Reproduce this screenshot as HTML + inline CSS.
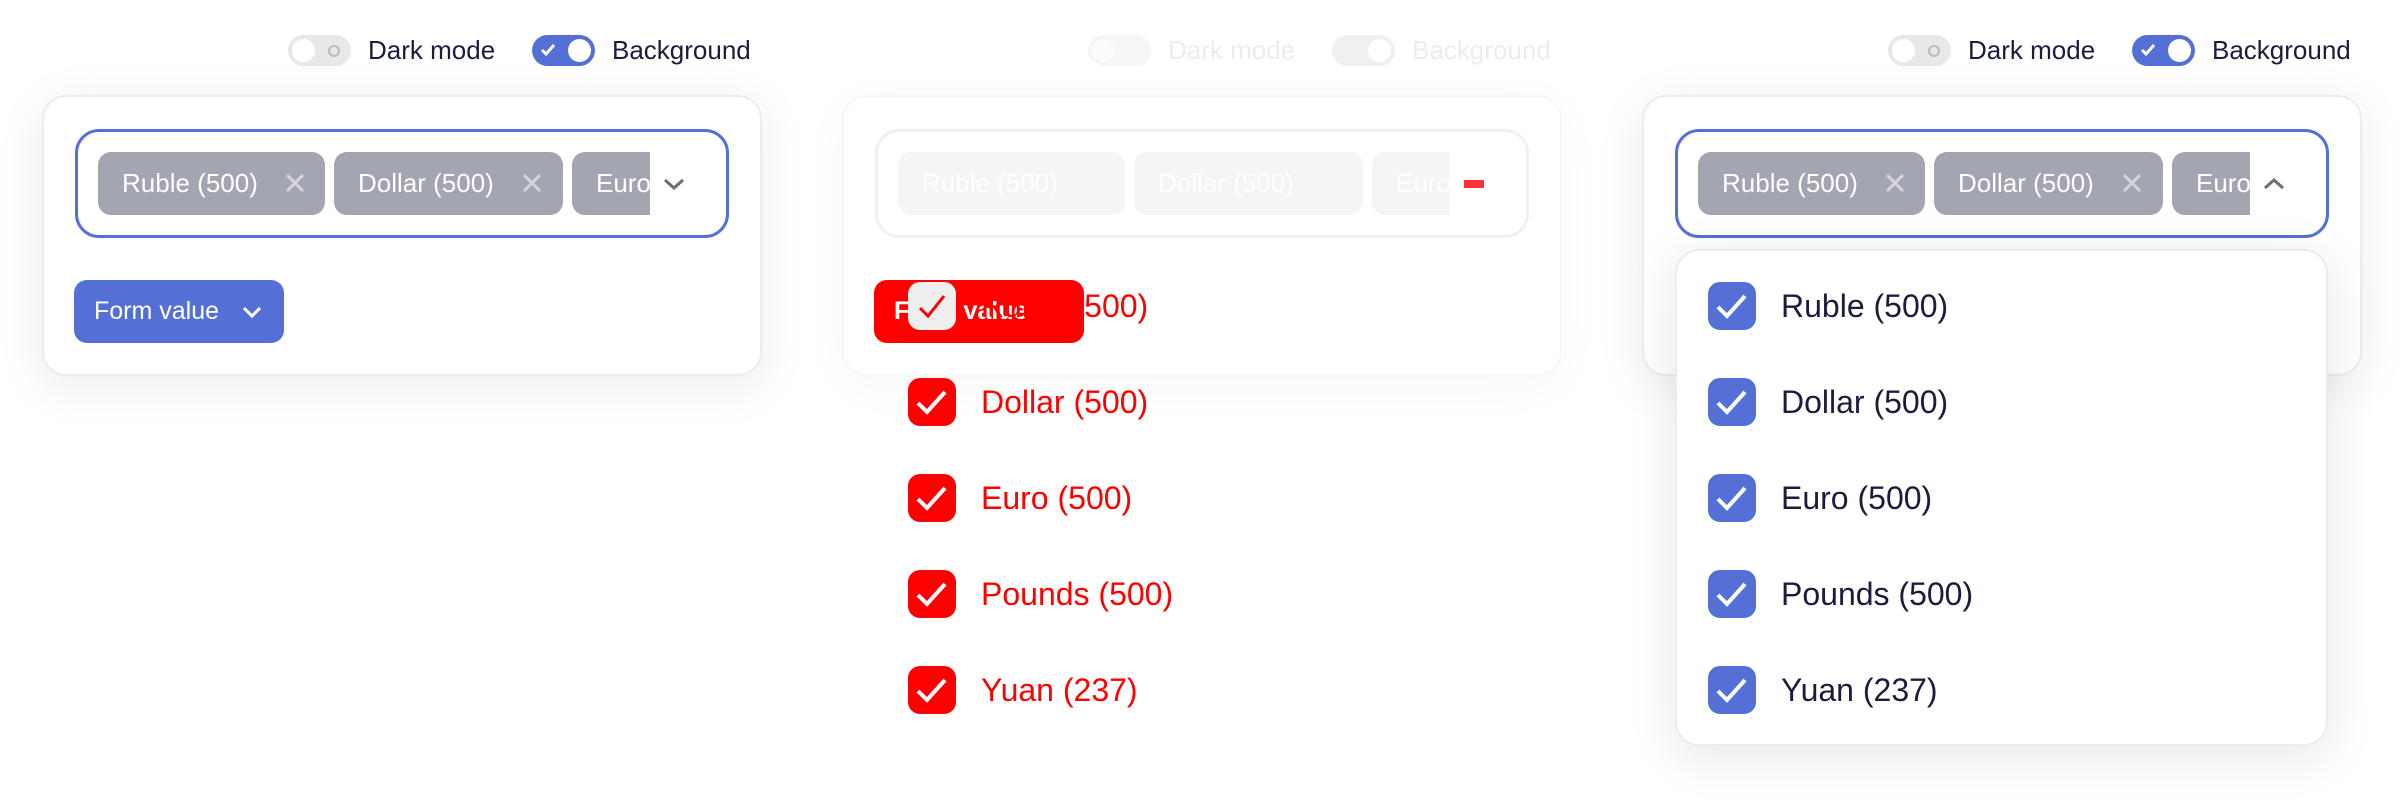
<!DOCTYPE html>
<html><head><meta charset="utf-8"><style>
*{box-sizing:border-box;margin:0;padding:0}
body{width:2400px;height:800px;background:#fff;font-family:"Liberation Sans",sans-serif;position:relative;overflow:hidden}
.p{position:absolute;top:0;width:800px;height:800px}
.tg{position:absolute;top:35px;width:63px;height:31px;border-radius:16px}
.knob{position:absolute;top:4px;width:23px;height:23px;border-radius:50%;background:#fff}
.lbl{position:absolute;top:32px;font-size:26px;color:#1a1c3d;line-height:36px}
.card{position:absolute;left:42px;top:95px;width:720px;height:281px;border-radius:24px;background:#fff;border:2px solid #ececec;box-shadow:0 10px 50px rgba(0,0,0,.08)}
.inp{position:absolute;left:75px;top:129px;width:654px;height:109px;border:3px solid #5470d6;border-radius:24px}
.chip{position:absolute;top:152px;height:63px;border-radius:13px;background:#a3a5b1;color:#fff;font-size:26px;line-height:63px;padding-left:24px;overflow:hidden;white-space:nowrap}
.x{position:absolute;top:20px;width:22px;height:22px}
.btn{position:absolute;left:74px;top:280px;width:210px;height:63px;border-radius:13px;background:#5470d6;color:#fff;font-size:25px;line-height:63px;padding-left:20px}
.dd{position:absolute;left:75px;top:249px;width:653px;height:497px;border-radius:24px;background:#fff;border:2px solid #ececec;box-shadow:0 10px 50px rgba(0,0,0,.1)}
.row{position:absolute;left:108px;height:48px;z-index:2}
.cb{position:absolute;left:0;top:0;width:48px;height:48px;border-radius:12px;background:#5470d6}
.rt{position:absolute;left:73px;top:-2px;font-size:32px;line-height:52px;color:#1a1c3d;white-space:nowrap}
</style></head><body>

<div class="p" style="left:0">
 <div class="tg" style="left:288px;background:#e8e8e8"><div class="knob" style="left:4px"></div><div style="position:absolute;left:40px;top:10px;width:12px;height:12px;border:2px solid #bbb;border-radius:50%"></div></div>
 <div class="lbl" style="left:368px">Dark mode</div>
 <div class="tg" style="left:532px;background:#5470d6"><svg style="position:absolute;left:8px;top:8px" width="16" height="14"><path d="M2 7l4 4 8-9" stroke="#fff" stroke-width="3" fill="none"/></svg><div class="knob" style="left:36px"></div></div>
 <div class="lbl" style="left:612px">Background</div>
 <div class="card"></div>
 <div class="inp"></div>
 <div class="chip" style="left:98px;width:227px">Ruble (500)<svg class="x" style="left:186px" viewBox="0 0 22 22"><path d="M3 3l16 16M19 3L3 19" stroke="#d4d5db" stroke-width="3"/></svg></div>
 <div class="chip" style="left:334px;width:229px">Dollar (500)<svg class="x" style="left:187px" viewBox="0 0 22 22"><path d="M3 3l16 16M19 3L3 19" stroke="#d4d5db" stroke-width="3"/></svg></div>
 <div class="chip" style="left:572px;width:78px;border-radius:13px 0 0 13px">Euro</div>
 <svg style="position:absolute;left:663px;top:177px" width="22" height="14"><path d="M2 3l9 8 9-8" stroke="#6b6d7a" stroke-width="3" fill="none"/></svg>
 <div class="btn">Form value<svg style="position:absolute;left:168px;top:26px" width="20" height="13"><path d="M2 2l8 8 8-8" stroke="#fff" stroke-width="3" fill="none"/></svg></div>
</div>

<div class="p" style="left:800px">
 <div class="tg" style="left:288px;background:#f6f6f6"><div class="knob" style="left:4px;background:#fcfcfc"></div></div>
 <div class="lbl" style="left:368px;color:#ececec">Dark mode</div>
 <div class="tg" style="left:532px;background:#f0f0f0"><div class="knob" style="left:36px"></div></div>
 <div class="lbl" style="left:612px;color:#ececec">Background</div>
 <div class="card" style="border-color:#f7f7f7;box-shadow:0 10px 50px rgba(0,0,0,.03)"></div>
 <div class="inp" style="border-color:#f0f0f0"></div>
 <div class="chip" style="left:98px;width:227px;background:#f5f5f5">Ruble (500)</div>
 <div class="chip" style="left:334px;width:229px;background:#f5f5f5">Dollar (500)</div>
 <div class="chip" style="left:572px;width:78px;background:#f5f5f5;border-radius:13px 0 0 13px">Euro</div>
 <div style="position:absolute;left:664px;top:180px;width:20px;height:8px;background:#f00;opacity:.8"></div>
 <div class="btn" style="background:#f00;font-weight:bold">Form value</div>
 <div class="row" style="top:282px"><div class="cb" style="background:#eee"><svg width="48" height="48"><path d="M12 26l8 8 16-20" stroke="#f00" stroke-width="3" fill="none"/></svg></div><div class="rt" style="color:#f00">Ruble (500)</div></div>
 <div class="row" style="top:378px"><div class="cb" style="background:#f00"><svg width="48" height="48"><path d="M10 25l9 9 18-20" stroke="#fff" stroke-width="4" fill="none"/></svg></div><div class="rt" style="color:#f00">Dollar (500)</div></div>
 <div class="row" style="top:474px"><div class="cb" style="background:#f00"><svg width="48" height="48"><path d="M10 25l9 9 18-20" stroke="#fff" stroke-width="4" fill="none"/></svg></div><div class="rt" style="color:#f00">Euro (500)</div></div>
 <div class="row" style="top:570px"><div class="cb" style="background:#f00"><svg width="48" height="48"><path d="M10 25l9 9 18-20" stroke="#fff" stroke-width="4" fill="none"/></svg></div><div class="rt" style="color:#f00">Pounds (500)</div></div>
 <div class="row" style="top:666px"><div class="cb" style="background:#f00"><svg width="48" height="48"><path d="M10 25l9 9 18-20" stroke="#fff" stroke-width="4" fill="none"/></svg></div><div class="rt" style="color:#f00">Yuan (237)</div></div>
</div>

<div class="p" style="left:1600px">
 <div class="tg" style="left:288px;background:#e8e8e8"><div class="knob" style="left:4px"></div><div style="position:absolute;left:40px;top:10px;width:12px;height:12px;border:2px solid #bbb;border-radius:50%"></div></div>
 <div class="lbl" style="left:368px">Dark mode</div>
 <div class="tg" style="left:532px;background:#5470d6"><svg style="position:absolute;left:8px;top:8px" width="16" height="14"><path d="M2 7l4 4 8-9" stroke="#fff" stroke-width="3" fill="none"/></svg><div class="knob" style="left:36px"></div></div>
 <div class="lbl" style="left:612px">Background</div>
 <div class="card"></div>
 <div class="inp"></div>
 <div class="chip" style="left:98px;width:227px">Ruble (500)<svg class="x" style="left:186px" viewBox="0 0 22 22"><path d="M3 3l16 16M19 3L3 19" stroke="#d4d5db" stroke-width="3"/></svg></div>
 <div class="chip" style="left:334px;width:229px">Dollar (500)<svg class="x" style="left:187px" viewBox="0 0 22 22"><path d="M3 3l16 16M19 3L3 19" stroke="#d4d5db" stroke-width="3"/></svg></div>
 <div class="chip" style="left:572px;width:78px;border-radius:13px 0 0 13px">Euro</div>
 <svg style="position:absolute;left:663px;top:177px" width="22" height="14"><path d="M2 11l9-8 9 8" stroke="#6b6d7a" stroke-width="3" fill="none"/></svg>
 <div class="dd"></div>
 <div class="row" style="top:282px"><div class="cb"><svg width="48" height="48"><path d="M10 25l9 9 18-20" stroke="#fff" stroke-width="4" fill="none"/></svg></div><div class="rt">Ruble (500)</div></div>
 <div class="row" style="top:378px"><div class="cb"><svg width="48" height="48"><path d="M10 25l9 9 18-20" stroke="#fff" stroke-width="4" fill="none"/></svg></div><div class="rt">Dollar (500)</div></div>
 <div class="row" style="top:474px"><div class="cb"><svg width="48" height="48"><path d="M10 25l9 9 18-20" stroke="#fff" stroke-width="4" fill="none"/></svg></div><div class="rt">Euro (500)</div></div>
 <div class="row" style="top:570px"><div class="cb"><svg width="48" height="48"><path d="M10 25l9 9 18-20" stroke="#fff" stroke-width="4" fill="none"/></svg></div><div class="rt">Pounds (500)</div></div>
 <div class="row" style="top:666px"><div class="cb"><svg width="48" height="48"><path d="M10 25l9 9 18-20" stroke="#fff" stroke-width="4" fill="none"/></svg></div><div class="rt">Yuan (237)</div></div>
</div>
</body></html>
